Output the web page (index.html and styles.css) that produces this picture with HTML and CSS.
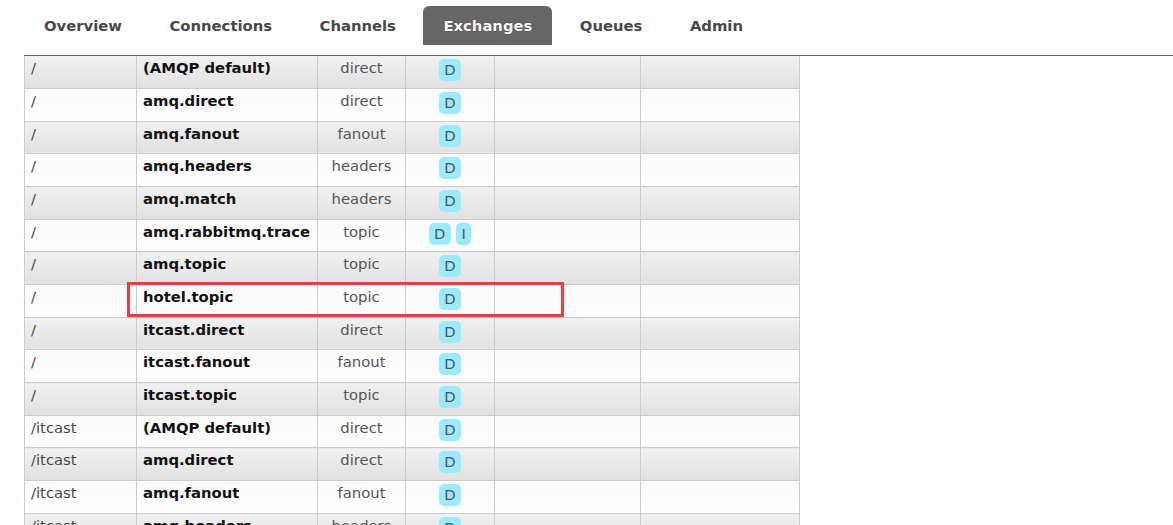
FILE: index.html
```html
<!DOCTYPE html>
<html lang="en">
<head>
<meta charset="UTF-8" />
<title>RabbitMQ Management: Exchanges</title>
<link rel="stylesheet" href="styles.css">
</head>
<body>
<div class="page">
<ul class="tabs">
<li>Overview</li>
<li>Connections</li>
<li>Channels</li>
<li class="active">Exchanges</li>
<li>Queues</li>
<li>Admin</li>
</ul>

<table class="list">
<colgroup>
<col class="c-vhost"><col class="c-name"><col class="c-type"><col class="c-feat"><col class="c-in"><col class="c-out">
</colgroup>
<tbody>
<tr><td>/</td><td class="name">(AMQP default)</td><td class="type">direct</td><td class="feat"><span class="tag">D</span></td><td></td><td></td></tr>
<tr><td>/</td><td class="name">amq.direct</td><td class="type">direct</td><td class="feat"><span class="tag">D</span></td><td></td><td></td></tr>
<tr><td>/</td><td class="name">amq.fanout</td><td class="type">fanout</td><td class="feat"><span class="tag">D</span></td><td></td><td></td></tr>
<tr><td>/</td><td class="name">amq.headers</td><td class="type">headers</td><td class="feat"><span class="tag">D</span></td><td></td><td></td></tr>
<tr><td>/</td><td class="name">amq.match</td><td class="type">headers</td><td class="feat"><span class="tag">D</span></td><td></td><td></td></tr>
<tr><td>/</td><td class="name">amq.rabbitmq.trace</td><td class="type">topic</td><td class="feat"><span class="tag">D</span><span class="tag">I</span></td><td></td><td></td></tr>
<tr><td>/</td><td class="name">amq.topic</td><td class="type">topic</td><td class="feat"><span class="tag">D</span></td><td></td><td></td></tr>
<tr><td>/</td><td class="name">hotel.topic</td><td class="type">topic</td><td class="feat"><span class="tag">D</span></td><td></td><td></td></tr>
<tr><td>/</td><td class="name">itcast.direct</td><td class="type">direct</td><td class="feat"><span class="tag">D</span></td><td></td><td></td></tr>
<tr><td>/</td><td class="name">itcast.fanout</td><td class="type">fanout</td><td class="feat"><span class="tag">D</span></td><td></td><td></td></tr>
<tr><td>/</td><td class="name">itcast.topic</td><td class="type">topic</td><td class="feat"><span class="tag">D</span></td><td></td><td></td></tr>
<tr><td>/itcast</td><td class="name">(AMQP default)</td><td class="type">direct</td><td class="feat"><span class="tag">D</span></td><td></td><td></td></tr>
<tr><td>/itcast</td><td class="name">amq.direct</td><td class="type">direct</td><td class="feat"><span class="tag">D</span></td><td></td><td></td></tr>
<tr><td>/itcast</td><td class="name">amq.fanout</td><td class="type">fanout</td><td class="feat"><span class="tag">D</span></td><td></td><td></td></tr>
<tr><td>/itcast</td><td class="name">amq.headers</td><td class="type">headers</td><td class="feat"><span class="tag">D</span></td><td></td><td></td></tr>
</tbody>
</table>

<div class="mark"></div>
</div>
</body>
</html>
```

FILE: styles.css
```css
* {
box-sizing: border-box;
}
html, body {
margin: 0;
height: 100%;
overflow: hidden;
background: #fff;
}
body {
font-family: "DejaVu Sans", Verdana, sans-serif;
font-size: 14.8px;
color: #484848;
}
.page {
position: relative;
padding-left: 24px;
}
.tabs {
list-style: none;
margin: 0;
padding: 6px 0 10px 0;
display: flex;
gap: 7.5px;
border-bottom: 1px solid #666;
}
.tabs li {
height: 39px;
line-height: 39px;
padding: 0 20px;
font-weight: bold;
font-size: 14.8px;
color: #484848;
border-radius: 6px 6px 0 0;
}
.tabs li.active {
background: #666;
color: #fff;
text-shadow: 0 0 1px #222;
}
.list {
border-collapse: collapse;
width: 775px;
table-layout: fixed;
}
.c-vhost { width: 112px; }
.c-name { width: 181px; }
.c-type { width: 88px; }
.c-feat { width: 89px; }
.c-in { width: 146px; }
.c-out { width: 159px; }
.list td {
border: 1px solid #ccc;
height: 32.67px;
padding: 1px 6px 0 6px;
vertical-align: top;
line-height: 21px;
white-space: nowrap;
background: linear-gradient(#fafafa, #fff);
}
.list tr:first-child td {
border-top: 0;
}
.list tr:nth-child(odd) td {
background: linear-gradient(#f1f1f1, #e1e1e1);
}
.list td.name {
font-weight: bold;
color: #111;
}
.list td.type {
text-align: center;
color: #555;
}
.list td.feat {
text-align: center;
padding-top: 3px;
}
.tag {
display: inline-block;
height: 22px;
line-height: 22px;
padding: 0 5.5px;
margin: 0 2.5px;
border-radius: 5px;
background: #99ebff;
color: #555;
}
.mark {
position: absolute;
left: 127px;
top: 282px;
width: 437px;
height: 35px;
border: 3px solid #f33b3b;
}
```
